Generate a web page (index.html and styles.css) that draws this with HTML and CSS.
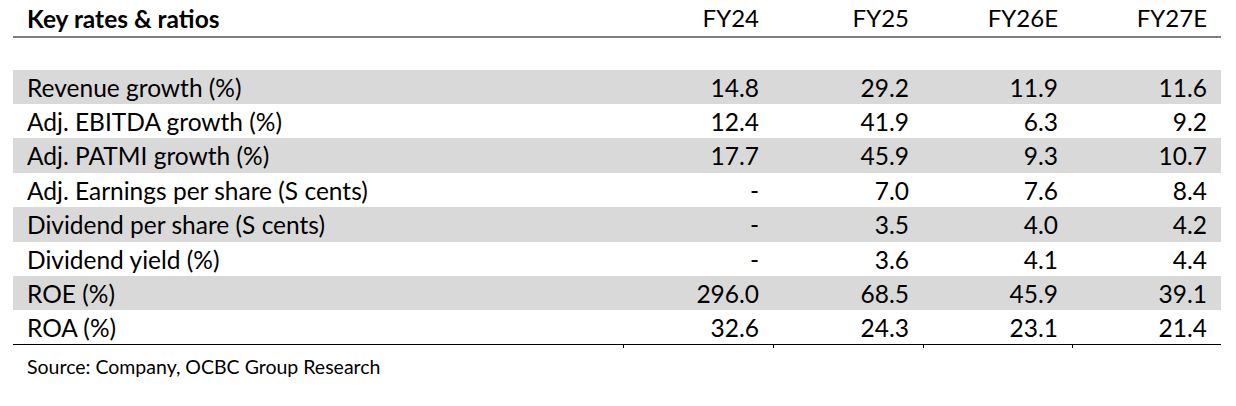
FILE: index.html
```html
<!DOCTYPE html>
<html lang="en">
<head>
<meta charset="utf-8">
<title>Key rates &amp; ratios</title>
<link rel="stylesheet" href="styles.css">
</head>
<body>
<div class="report">
  <table class="ratios">
    <colgroup>
      <col class="c-label"><col class="c-num"><col class="c-num"><col class="c-num2"><col class="c-num2">
    </colgroup>
    <thead>
      <tr class="head">
        <th class="title">Key rates &amp; ratios</th>
        <th>FY24</th><th>FY25</th><th>FY26E</th><th>FY27E</th>
      </tr>
    </thead>
    <tbody>
      <tr class="spacer"><td colspan="5"></td></tr>
      <tr class="shade"><td>Revenue growth (%)</td><td>14.8</td><td>29.2</td><td>11.9</td><td>11.6</td></tr>
      <tr><td>Adj. EBITDA growth (%)</td><td>12.4</td><td>41.9</td><td>6.3</td><td>9.2</td></tr>
      <tr class="shade"><td>Adj. PATMI growth (%)</td><td>17.7</td><td>45.9</td><td>9.3</td><td>10.7</td></tr>
      <tr><td>Adj. Earnings per share (S cents)</td><td>-</td><td>7.0</td><td>7.6</td><td>8.4</td></tr>
      <tr class="shade"><td>Dividend per share (S cents)</td><td>-</td><td>3.5</td><td>4.0</td><td>4.2</td></tr>
      <tr><td>Dividend yield (%)</td><td>-</td><td>3.6</td><td>4.1</td><td>4.4</td></tr>
      <tr class="shade"><td>ROE (%)</td><td>296.0</td><td>68.5</td><td>45.9</td><td>39.1</td></tr>
      <tr class="last"><td>ROA (%)</td><td>32.6</td><td>24.3</td><td>23.1</td><td>21.4</td></tr>
    </tbody>
  </table>
  <div class="ticks"><span></span><span></span><span></span><span></span><span></span></div>
  <p class="source">Source: Company, OCBC Group Research</p>
</div>
</body>
</html>
```
FILE: styles.css
```css
html, body {
  margin: 0;
  padding: 0;
  background: #ffffff;
}

body {
  font-family: Lato, "Liberation Sans", sans-serif;
  color: #000000;
}

.report {
  padding-left: 13px;
  width: 1208px;
}

.ratios {
  width: 1208px;
  border-collapse: collapse;
  table-layout: fixed;
}

.c-label { width: 610px; }
.c-num { width: 150px; }
.c-num2 { width: 149px; }

.ratios th,
.ratios td {
  box-sizing: border-box;
  padding: 0 14px;
  text-align: right;
  white-space: nowrap;
  font-weight: normal;
  vertical-align: top;
}

.ratios th:first-child,
.ratios td:first-child {
  text-align: left;
}

.head th {
  height: 37px;
  padding-top: 4px;
  font-size: 24px;
  line-height: 1.2;
  border-bottom: 2px solid #7f7f7f;
}

.head .title {
  font-weight: bold;
  font-size: 24.5px;
  padding-top: 3.5px;
}

.spacer td {
  height: 32.7px;
  padding: 0;
}

.ratios tbody tr:not(.spacer) td {
  height: 34.4px;
  padding-top: 3px;
  font-size: 24.5px;
  line-height: 1.2;
}

.shade td {
  background: #d9d9d9;
}

.last td {
  border-bottom: 1px solid #000000;
}

.ticks {
  display: grid;
  grid-template-columns: 610px 150px 150px 149px 149px;
  height: 3px;
}

.ticks span + span {
  border-left: 1px solid #000000;
}

.source {
  margin: 7px 0 0 14px;
  font-size: 19.5px;
  line-height: 1.2;
}
```
